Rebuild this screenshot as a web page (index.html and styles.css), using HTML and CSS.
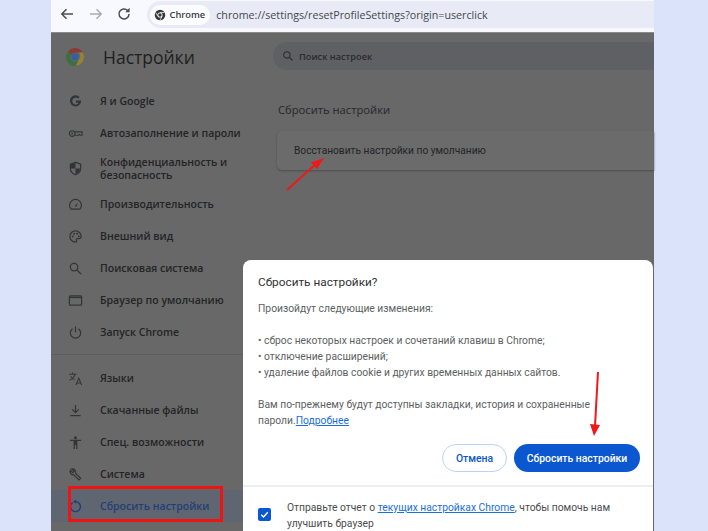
FILE: index.html
```html
<!DOCTYPE html>
<html lang="ru">
<head>
<meta charset="utf-8">
<title>Настройки</title>
<link rel="stylesheet" href="styles.css">
</head>
<body>
<div class="page">
  <div class="window">
    <header class="toolbar">
      <svg class="nav-icon" viewBox="0 0 16 16"><path d="M14 8H3M7.500 3.200 2.800 8l4.700 4.800" fill="none" stroke="#4a4d52" stroke-width="1.500"/></svg>
      <svg class="nav-icon" viewBox="0 0 16 16"><path d="M2 8h11M8.500 3.200 13.200 8l-4.700 4.800" fill="none" stroke="#a9abb0" stroke-width="1.500"/></svg>
      <svg class="nav-icon" viewBox="0 0 16 16"><path d="M13 8a5 5 0 1 1-1.500-3.600" fill="none" stroke="#4a4d52" stroke-width="1.500"/><path d="M13.600 1.800v4.400H9.200z" fill="#4a4d52"/></svg>
      <div class="address">
        <div class="chip">
          <svg class="chip-icon" viewBox="0 0 16 16"><circle cx="8" cy="8" r="7" fill="#33363a"/><circle cx="8" cy="8" r="3.400" fill="#fff"/><circle cx="8" cy="8" r="2.300" fill="#33363a"/><path d="M8 4.600h6M5.100 9.700 2.200 4.600M10.900 9.700 8 14.800" stroke="#fff" stroke-width="1"/></svg>
          <span>Chrome</span>
        </div>
        <span class="url">chrome://settings/resetProfileSettings?origin=userclick</span>
      </div>
    </header>
    <div class="settings">
      <nav class="sidebar">
        <div class="brand">
          <svg class="logo" viewBox="0 0 18 18">
            <path d="M9 0a9 9 0 0 1 7.800 4.500H9a4.500 4.500 0 0 0-4.200 2.900L2.400 3A9 9 0 0 1 9 0z" fill="#8c3a33"/>
            <path d="M16.800 4.500A9 9 0 0 1 9.600 18l3.300-6.700A4.500 4.500 0 0 0 12.800 4.500z" fill="#978132"/>
            <path d="M2.400 3A9 9 0 0 0 9.600 18l3.300-6.700A4.500 4.500 0 0 1 4.800 7.400z" fill="#3b7041"/>
            <circle cx="9" cy="9" r="3.700" fill="#34609f"/>
          </svg>
          <span class="brand-title">Настройки</span>
        </div>
        <ul class="menu">
          <li class="item"><span class="ico"><svg viewBox="0 0 16 16"><path d="M14 7H8.500v2.300h3A3.700 3.700 0 1 1 10.700 4.800l1.700-1.700A6 6 0 1 0 14 8z" fill="#333436"/></svg></span>Я и Google</li>
          <li class="item"><span class="ico"><svg viewBox="0 0 16 16"><circle cx="4.500" cy="8" r="3" fill="none" stroke="#333436" stroke-width="1.200"/><circle cx="4.500" cy="8" r="1" fill="#333436"/><path d="M7.500 6.200h7.500v3.600h-2l-1-.8-1 .8H7.500" fill="none" stroke="#333436" stroke-width="1.200"/></svg></span>Автозаполнение и пароли</li>
          <li class="item tall"><span class="ico"><svg viewBox="0 0 16 16"><path d="M8 1.500 13.500 3.500v4.200c0 3.200-2.300 5.800-5.500 6.800-3.200-1-5.500-3.600-5.500-6.800V3.500z" fill="none" stroke="#333436" stroke-width="1.300"/><path d="M8 2v6H3V3.500zM8 8h5c-.3 2.800-2.300 5-5 6z" fill="#333436"/></svg></span>Конфиденциальность и безопасность</li>
          <li class="item"><span class="ico"><svg viewBox="0 0 16 16"><path d="M3.200 13a6.300 6.300 0 1 1 9.600 0z" fill="none" stroke="#333436" stroke-width="1.300"/><path d="M7 9.500l3.500-3.500-1.500 4.500z" fill="#333436"/></svg></span>Производительность</li>
          <li class="item"><span class="ico"><svg viewBox="0 0 16 16"><path d="M8 2a6 6 0 0 0 0 12c1.400 0 1.600-1 1-1.800-.6-.9 0-1.900 1-1.900h1.700c1.500 0 2.300-1 2.300-2.300C14 4.500 11.300 2 8 2z" fill="none" stroke="#333436" stroke-width="1.300"/><circle cx="5" cy="8" r="1" fill="#333436"/><circle cx="6.500" cy="5" r="1" fill="#333436"/><circle cx="9.800" cy="5" r="1" fill="#333436"/><circle cx="11.500" cy="7.800" r="1" fill="#333436"/></svg></span>Внешний вид</li>
          <li class="item"><span class="ico"><svg viewBox="0 0 16 16"><circle cx="6.500" cy="6.500" r="4" fill="none" stroke="#333436" stroke-width="1.300"/><path d="M9.500 9.500 14 14" stroke="#333436" stroke-width="1.500"/></svg></span>Поисковая система</li>
          <li class="item"><span class="ico"><svg viewBox="0 0 16 16"><rect x="1.500" y="3" width="13" height="10" rx="1" fill="none" stroke="#333436" stroke-width="1.300"/><path d="M1.500 4h13v1.500h-13z" fill="#333436"/></svg></span>Браузер по умолчанию</li>
          <li class="item"><span class="ico"><svg viewBox="0 0 16 16"><path d="M8 1.500V8" stroke="#333436" stroke-width="1.300"/><path d="M4.800 4a5.500 5.500 0 1 0 6.400 0" fill="none" stroke="#333436" stroke-width="1.300"/></svg></span>Запуск Chrome</li>
          <li class="sep"></li>
          <li class="item"><span class="ico"><svg viewBox="0 0 16 16"><path d="M1 3.500h8M5 1.500v2M7.500 3.500C7 6 4.500 8.500 1.500 10M3 5.500c1 1.800 2.500 3 4 3.700" fill="none" stroke="#333436" stroke-width="1.100"/><path d="M8.500 15l3-7.500 3 7.500M9.500 12.800h4" fill="none" stroke="#333436" stroke-width="1.100"/></svg></span>Языки</li>
          <li class="item"><span class="ico"><svg viewBox="0 0 16 16"><path d="M8 2v8M4.500 6.800 8 10.300l3.500-3.500M2.500 13.500h11" fill="none" stroke="#333436" stroke-width="1.300"/></svg></span>Скачанные файлы</li>
          <li class="item"><span class="ico"><svg viewBox="0 0 16 16"><circle cx="8" cy="2.800" r="1.600" fill="#333436"/><path d="M2 5h12v1.500H10V15H8.700v-4H7.300v4H6V6.500H2z" fill="#333436"/></svg></span>Спец. возможности</li>
          <li class="item"><span class="ico"><svg viewBox="0 0 16 16"><path d="M2.500 3.500 5 6l1.500-1.500L4 2a3.500 3.500 0 0 1 4 4.500l5.500 5.500-1.800 1.800-5.500-5.500A3.500 3.500 0 0 1 2.500 3.500z" fill="none" stroke="#333436" stroke-width="1.300"/></svg></span>Система</li>
          <li class="item active"><span class="ico"><svg viewBox="0 0 16 16"><path d="M5 3.700a5.300 5.300 0 1 0 3-.9" fill="none" stroke="#233f72" stroke-width="1.500"/><path d="M8.500 .5v4.600L5.500 2.800z" fill="#233f72"/></svg></span>Сбросить настройки</li>
        </ul>
      </nav>
      <main class="content">
        <div class="search">
          <svg class="search-icon" viewBox="0 0 16 16"><circle cx="6.500" cy="6.500" r="4.300" fill="none" stroke="#2b2c2e" stroke-width="1.400"/><path d="M9.700 9.700 14 14" stroke="#2b2c2e" stroke-width="1.500"/></svg>
          <span>Поиск настроек</span>
        </div>
        <h2 class="section-title">Сбросить настройки</h2>
        <div class="card">Восстановить настройки по умолчанию</div>
      </main>
    </div>
  </div>
  <section class="dialog">
    <div class="dialog-body">
      <h3 class="dialog-title">Сбросить настройки?</h3>
      <p class="dialog-text">Произойдут следующие изменения:</p>
      <ul class="changes">
        <li>• сброс некоторых настроек и сочетаний клавиш в Chrome;</li>
        <li>• отключение расширений;</li>
        <li>• удаление файлов cookie и других временных данных сайтов.</li>
      </ul>
      <p class="dialog-text">Вам по-прежнему будут доступны закладки, история и сохраненные пароли.<a class="link">Подробнее</a></p>
      <div class="actions">
        <button class="btn btn-cancel">Отмена</button>
        <button class="btn btn-primary">Сбросить настройки</button>
      </div>
    </div>
    <div class="dialog-footer">
      <span class="checkbox"><svg viewBox="0 0 14 14"><path d="M3.500 7.200 6 9.600l4.500-5" fill="none" stroke="#fff" stroke-width="1.500"/></svg></span>
      <p class="footer-text">Отправьте отчет о <a class="link">текущих настройках Chrome</a>, чтобы помочь нам улучшить браузер</p>
    </div>
  </section>
  <div class="highlight"></div>
  <svg class="arrows" viewBox="0 0 708 531">
    <path d="M287 190 318 162" stroke="#f01818" stroke-width="2" fill="none"/>
    <path d="M324 158 311 162.500 317 169z" fill="#f01818"/>
    <path d="M598 372 595 426" stroke="#f01818" stroke-width="2" fill="none"/>
    <path d="M594 436 590 424 600 425z" fill="#f01818"/>
  </svg>
</div>
</body>
</html>
```
FILE: styles.css
```css
* { box-sizing: border-box; }
html, body { margin: 0; padding: 0; }
body { background: #dbe3fa; font-family: "Open Sans", "Noto Sans", sans-serif; }
ul { list-style: none; margin: 0; padding: 0; }
h2, h3, p { margin: 0; font-weight: 400; }

.page { position: relative; width: 708px; height: 531px; overflow: hidden; padding: 0 54px 0 51px; }
.window { height: 531px; display: flex; flex-direction: column; background: #686868; }

.toolbar { height: 33px; flex: none; background: #f8f9fe; border-bottom: 1px solid #8a8a8a; display: flex; align-items: flex-start; padding: 1px 0 0 8px; }
.nav-icon { width: 16px; height: 16px; margin: 5px 12.500px 0 0; flex: none; }
.address { flex: 1; height: 27px; margin-left: 2px; background: #e8ebf6; border-radius: 14px 0 0 14px; display: flex; align-items: center; padding-left: 3px; }
.chip { height: 20px; background: #fbfcff; border-radius: 10px; display: flex; align-items: center; gap: 4px; padding: 0 5px 0 4px; font-size: 9.300px; font-weight: 600; color: #3b3d40; }
.chip-icon { width: 12px; height: 12px; }
.url { margin-left: 6px; font-size: 10.700px; color: #45484d; }

.settings { flex: 1; display: flex; min-height: 0; }
.sidebar { width: 222px; flex: none; }
.brand { height: 47px; display: flex; align-items: center; padding: 0 0 0 15px; }
.logo { width: 18px; height: 18px; flex: none; }
.brand-title { margin-left: 19px; font-size: 17.500px; color: #1e1f21; }
.menu { padding-top: 5px; }
.item { height: 32px; display: flex; align-items: center; font-size: 10.500px; line-height: 13px; font-weight: 600; color: #232426; padding-right: 20px; }
.item.tall { height: 39px; }
.ico { width: 49px; flex: none; display: flex; padding-left: 17px; }
.ico svg { width: 15px; height: 15px; }
.item.active { color: #233f72; background: #5f6672; width: 192px; }
.sep { height: 7px; border-bottom: 1px solid #5e5e5e; margin-bottom: 7px; }

.content { flex: 1; padding-top: 9px; }
.search { height: 28px; background: #5f6063; border-radius: 14px 0 0 14px; display: flex; align-items: center; padding-left: 9px; gap: 5px; font-size: 9.200px; font-weight: 600; color: #2a2b2d; }
.search-icon { width: 12px; height: 12px; }
.section-title { margin: 32px 0 0 5px; font-size: 11.200px; line-height: 16px; color: #26272a; }
.card { margin: 13px 0 0 4px; height: 39px; background: #6b6b6b; border-radius: 5px 0 0 5px; box-shadow: 0 1px 2px #4e4e4e; display: flex; align-items: center; padding-left: 17px; font-family: "Roboto", sans-serif; font-size: 10.200px; color: #232426; }

.dialog { position: absolute; left: 243px; top: 260px; width: 410px; height: 271px; background: #fff; border-radius: 8px 8px 0 0; overflow: hidden; color: #5c5f63; font-family: "Roboto", sans-serif; font-size: 10.300px; line-height: 16px; }
.dialog-body { padding: 13px 15px 0; height: 227px; border-bottom: 2px solid #eeeeee; }
.dialog-title { font-size: 11.800px; line-height: 18px; color: #303236; }
.dialog-text { margin-top: 10px; width: 340px; }
.changes { margin-top: 16px; }
.changes + .dialog-text { margin-top: 16px; }
.link { color: #1a6fd8; text-decoration: underline; }
.actions { display: flex; justify-content: flex-end; gap: 7px; margin-top: 15px; margin-right: -2px; }
.btn { height: 28px; border-radius: 14px; font-family: inherit; font-size: 10.400px; font-weight: 500; padding: 0; }
.btn-cancel { width: 65px; background: #fff; color: #0b57d0; border: 1px solid #bcd3f5; }
.btn-primary { width: 126px; background: #0b57d0; color: #fff; border: 0; }
.dialog-footer { display: flex; padding: 13px 15px 0; }
.checkbox { width: 13px; height: 13px; margin-top: 8px; background: #0b57d0; border-radius: 2px; flex: none; display: flex; }
.checkbox svg { width: 13px; height: 13px; }
.footer-text { margin-left: 16px; width: 340px; color: #4a4c50; }

.highlight { position: absolute; left: 68px; top: 486px; width: 155px; height: 36px; border: 3px solid #ee1414; }
.arrows { position: absolute; left: 0; top: 0; width: 708px; height: 531px; pointer-events: none; }
```
